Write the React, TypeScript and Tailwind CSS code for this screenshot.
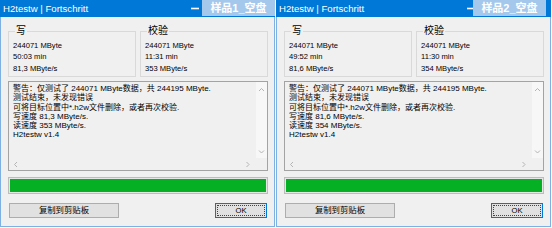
import React from "react";

type WinProps = {
  label: string;
  labelClass: string;
  write: string[];
  verify: string[];
  lines: string[];
};

function Chevron({ dir }: { dir: "up" | "down" | "left" | "right" }) {
  const d =
    dir === "up"
      ? "M1 4 L3.5 1.5 L6 4"
      : dir === "down"
      ? "M1 1.5 L3.5 4 L6 1.5"
      : dir === "left"
      ? "M4 1 L1.5 3.5 L4 6"
      : "M1.5 1 L4 3.5 L1.5 6";
  const w = dir === "up" || dir === "down" ? 7 : 5.5;
  const h = dir === "up" || dir === "down" ? 5.5 : 7;
  return (
    <svg width={w} height={h} viewBox={`0 0 ${w} ${h}`} className="block">
      <path d={d} fill="none" stroke="#b4b4b4" strokeWidth="1" />
    </svg>
  );
}

function Group({ title, values }: { title: string; values: string[] }) {
  return (
    <div className="relative h-[46px] border border-[#d9d9d9] pl-[4px] pt-[8px]">
      <div className="absolute left-[6px] top-[-7px] bg-[#f0f0f0] px-[1px] text-[10px] leading-[12px]">
        {title}
      </div>
      {values.map((v) => (
        <div key={v} className="text-[7.6px] leading-[11.3px] whitespace-nowrap">
          {v}
        </div>
      ))}
    </div>
  );
}

function Win({ label, labelClass, write, verify, lines }: WinProps) {
  return (
    <div className="relative flex h-[227px] w-[275px] flex-col">
      <div className="flex h-[17px] shrink-0 items-center bg-[#0078d7] pl-[3px] pr-[76px] text-white">
        <span className="text-[9.6px] leading-[17px]">H2testw | Fortschritt</span>
        <svg width="8" height="17" viewBox="0 0 8 17" className="ml-auto block shrink-0">
          <rect x="0" y="7.7" width="8" height="1.6" fill="#ffffff" />
        </svg>
      </div>
      <div
        className={`absolute top-0 flex h-[16px] items-center justify-center bg-[#a4c8ec] text-[11px] font-bold leading-[16px] text-white ${labelClass}`}
      >
        {label}
      </div>
      <div className="flex flex-1 flex-col border-x border-b border-[#7fb0e2] bg-[#f0f0f0] pl-[7px]">
        <div className="mt-[14px] grid w-[260px] grid-cols-2 gap-[4px]">
          <Group title="写" values={write} />
          <Group title="校验" values={verify} />
        </div>
        <div className="mt-[4px] grid h-[90px] w-[260px] grid-cols-[1fr_11px] grid-rows-[1fr_12px] border border-[#a3a3a3] bg-[#f0f0f0]">
          <div className="overflow-hidden whitespace-nowrap pl-[4px] pt-[2px] text-[8px] leading-[9.3px]">
            {lines.map((l, i) => (
              <div key={i}>{l}</div>
            ))}
          </div>
          <div className="flex flex-col items-center justify-between bg-[#f7f7f7] pb-[4px] pt-[5px]">
            <Chevron dir="up" />
            <Chevron dir="down" />
          </div>
          <div className="flex items-center justify-between bg-[#f0f0f0] pl-[4px] pr-[6px]">
            <Chevron dir="left" />
            <Chevron dir="right" />
          </div>
          <div className="bg-[#f0f0f0]" />
        </div>
        <div className="mt-[6px] h-[17px] w-[260px] border border-[#bcbcbc] bg-[#e6e6e6] p-px">
          <div className="h-full w-full bg-[#06b025]" />
        </div>
        <div className="mt-[9px] flex w-[260px] items-center justify-between">
          <div className="ml-px flex h-[15px] w-[110px] items-center justify-center border border-[#adadad] bg-[#e1e1e1] text-[8.4px]">
            复制到剪贴板
          </div>
          <div className="mr-px flex h-[15px] w-[52px] items-center justify-center border-[1.5px] border-[#0078d7] bg-[#e1e1e1] p-[1px]">
            <div className="flex h-full w-full items-center justify-center border border-dotted border-[#444] text-[7.6px]">
              OK
            </div>
          </div>
        </div>
      </div>
    </div>
  );
}

export default function App() {
  return (
    <div className="flex h-[228px] w-[552px] gap-px bg-white font-['Liberation_Sans','Noto_Sans_CJK_SC',sans-serif] text-black">
      <Win
        label="样品1_空盘"
        labelClass="left-[202px] w-[73px]"
        write={["244071 MByte", "50:03 min", "81,3 MByte/s"]}
        verify={["244071 MByte", "11:31 min", "353 MByte/s"]}
        lines={[
          "警告：仅测试了 244071 MByte数据，共 244195 MByte.",
          "测试结束，未发现错误",
          "可将目标位置中*.h2w文件删除，或者再次校验.",
          "写速度 81,3 MByte/s.",
          "读速度 353 MByte/s.",
          "H2testw v1.4",
        ]}
      />
      <Win
        label="样品2_空盘"
        labelClass="left-[197px] w-[73px]"
        write={["244071 MByte", "49:52 min", "81,6 MByte/s"]}
        verify={["244071 MByte", "11:30 min", "354 MByte/s"]}
        lines={[
          "警告：仅测试了 244071 MByte数据，共 244195 MByte.",
          "测试结束，未发现错误",
          "可将目标位置中*.h2w文件删除，或者再次校验.",
          "写速度 81,6 MByte/s.",
          "读速度 354 MByte/s.",
          "H2testw v1.4",
        ]}
      />
    </div>
  );
}
